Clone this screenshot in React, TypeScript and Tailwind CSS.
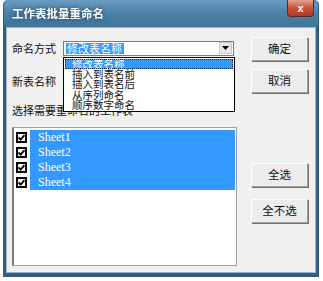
import React from 'react';

const sheets = ['Sheet1', 'Sheet2', 'Sheet3', 'Sheet4'];
const modes = ['修改表名称', '插入到表名前', '插入到表名后', '从序列命名', '顺序数字命名'];

const cjk = { fontFamily: '"Noto Sans CJK SC", "Noto Sans", sans-serif' };

function Check() {
  return (
    <div className="w-[11px] h-[11px] border-2 border-black bg-white flex items-center justify-center">
      <svg width="7" height="7" viewBox="0 0 7 7">
        <path d="M0.5 3.5 L2.6 5.6 L6.5 1.2" stroke="#000" strokeWidth="1.8" fill="none" />
      </svg>
    </div>
  );
}

function Btn({ label }: { label: string }) {
  return (
    <button
      className="w-[57px] h-[24px] bg-[#ececec] border border-t-white border-l-white border-r-[#a0a0a0] border-b-[#a0a0a0] shadow-[1px_1px_0_#707070] text-[11.5px] text-[#111] flex items-center justify-center"
      style={cjk}
    >
      {label}
    </button>
  );
}

export default function App() {
  return (
    <div className="w-[323px] h-[281px] bg-white overflow-hidden" style={cjk}>
      <div className="ml-[3px] w-[316px] h-[277px] flex flex-col bg-[#2f5e7e] rounded-t-[5px] p-[1px] pt-0">
        {/* title bar */}
        <div className="h-[27px] flex items-start justify-between bg-gradient-to-b from-[#6b9dc3] via-[#4b80a9] to-[#3f7399] rounded-t-[5px] pl-[8px] pr-[4px]">
          <span className="mt-[6px] text-white font-bold text-[11.5px] leading-[14px] drop-shadow-[0_0_2px_#1f3d55]">工作表批量重命名</span>
          <div className="w-[27px] h-[17px] rounded-b-[4px] border border-[#5a2a22] border-t-0 bg-gradient-to-b from-[#e5a08f] via-[#c9523b] to-[#b33a24] flex items-center justify-center">
            <span className="text-white font-bold text-[11px] leading-none" style={{ fontFamily: '"Liberation Sans", sans-serif' }}>x</span>
          </div>
        </div>
        {/* client area */}
        <div className="flex-1 mx-[2px] mb-[3px] bg-[#f0f0f0] border border-[#9fb6c8] flex pl-[5px] pt-[8px]">
          <div className="w-[225px] flex flex-col">
            <div className="h-[24px] flex items-center">
              <span className="w-[51px] text-[11px] text-[#111]">命名方式</span>
              <div className="relative">
                <div className="w-[171px] h-[15px] bg-white border border-[#7a7a7a] flex items-center pl-[2px] pr-[1px]">
                  <span className="bg-[#3399ff] text-white text-[11px] leading-[11px] px-[1px] h-[11px] w-[58px]">修改表名称</span>
                  <div className="ml-auto w-[13px] h-[12px] bg-[#e8e8e8] border border-[#c8c8c8] flex items-center justify-center">
                    <svg width="7" height="4" viewBox="0 0 7 4"><path d="M0 0 H7 L3.5 4 Z" fill="#000" /></svg>
                  </div>
                </div>
                <div className="absolute left-0 top-[16px] w-[172px] h-[55px] bg-white border border-black z-10 flex flex-col pt-[1px] px-[1px]">
                  {modes.map((m, i) => (
                    <div
                      key={m}
                      className={
                        'h-[10.4px] text-[10.5px] leading-[10.4px] pl-[7px] whitespace-nowrap ' +
                        (i === 0 ? 'bg-[#3399ff] text-white outline-1 outline-dotted outline-[#0a2b55] -outline-offset-1' : 'text-[#111]')
                      }
                    >
                      {m}
                    </div>
                  ))}
                </div>
              </div>
            </div>
            <div className="mt-[9px] h-[24px] flex items-center">
              <span className="w-[51px] text-[11px] text-[#111]">新表名称</span>
              <div className="w-[171px] h-[20px] bg-white border border-[#7a7a7a]" />
            </div>
            <div className="mt-[9px] h-[16px] flex items-center">
              <span className="text-[11px] text-[#111]">选择需要重命名的工作表</span>
            </div>
            <div className="mt-[9px] w-[225px] h-[139px] bg-white border border-[#a0a0a0] border-l-2 border-l-[#808080] pt-[2px] pl-[2px] pr-[1px]">
              {sheets.map((s) => (
                <div key={s} className="h-[15px] flex items-center">
                  <div className="w-[14px] flex items-center">
                    <Check />
                  </div>
                  <div
                    className="flex-1 h-[15px] bg-[#3399ff] text-white text-[12px] leading-[15px] pl-[8px]"
                    style={{ fontFamily: '"Liberation Serif", serif' }}
                  >
                    {s}
                  </div>
                </div>
              ))}
            </div>
          </div>
          <div className="ml-[14px] pt-[1px] flex flex-col">
            <Btn label="确定" />
            <div className="mt-[8px]"><Btn label="取消" /></div>
            <div className="mt-[70px]"><Btn label="全选" /></div>
            <div className="mt-[12px]"><Btn label="全不选" /></div>
          </div>
        </div>
      </div>
    </div>
  );
}
